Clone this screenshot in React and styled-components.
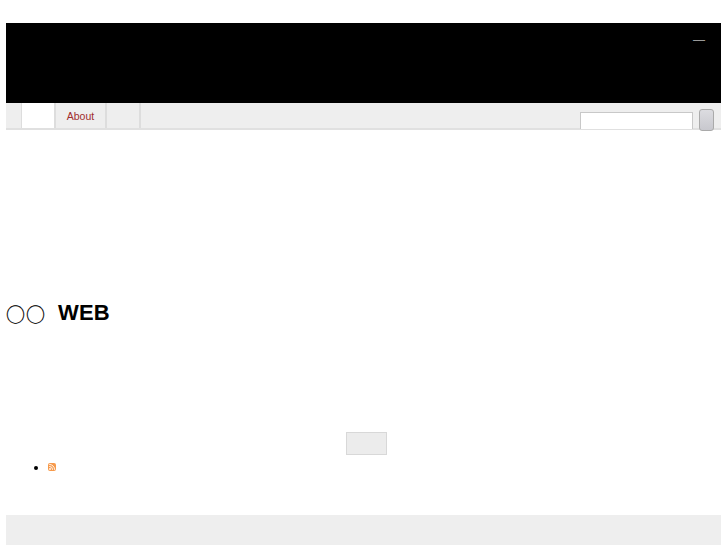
import styled, { createGlobalStyle } from "styled-components";

const GlobalStyle = createGlobalStyle`
  html, body {
    margin: 0;
    background: #fff;
  }
  body {
    font-family: "Liberation Sans", Arial, sans-serif;
  }
`;

const Page = styled.div`
  height: 545px;
  overflow: hidden;
  padding: 23px 6px 0;
  box-sizing: border-box;
  display: flex;
  flex-direction: column;
`;

const Header = styled.header`
  height: 80px;
  flex: none;
  background: #000;
  display: flex;
  justify-content: flex-end;
  padding: 10px 16px 0 0;
  box-sizing: border-box;
`;

const Dash = styled.span`
  font-size: 12px;
  line-height: 14px;
  color: #9a9a9a;
`;

const Nav = styled.nav`
  height: 27px;
  flex: none;
  box-sizing: border-box;
  background: #eee;
  border-bottom: 2px solid #e0e0e0;
  display: flex;
  justify-content: space-between;
  padding-left: 15px;
  padding-right: 7px;
`;

const Tabs = styled.ul`
  list-style: none;
  margin: 0;
  padding: 0;
  display: flex;
  border-left: 1px solid #ddd;
`;

const Tab = styled.li`
  width: ${(p) => p.$width}px;
  border-right: 2px solid #ddd;
  background: ${(p) => (p.$active ? "#fff" : "transparent")};
  color: #a02c2c;
  font-size: 10.5px;
  line-height: 26px;
  text-align: center;
`;

const Search = styled.form`
  display: flex;
  align-items: flex-end;
  gap: 6px;
  margin: 0;
`;

const SearchInput = styled.input`
  width: 113px;
  height: 17px;
  box-sizing: border-box;
  margin: 0 0 -1px;
  padding: 0;
  background: #fff;
  border: 1px solid #c8c8c8;
  border-bottom: 0;
`;

const SearchButton = styled.button`
  width: 15px;
  height: 22px;
  margin: 0 0 -3px;
  padding: 0;
  border: 1px solid #aaa;
  border-radius: 3px;
  background: linear-gradient(#dcdce0, #c8c8ce);
`;

const Main = styled.main`
  flex: 1;
  display: flex;
  flex-direction: column;
`;

const Title = styled.h1`
  margin: 169px 0 0;
  font-size: 22px;
  line-height: 28px;
  font-weight: 700;
  letter-spacing: 0.2px;
  color: #000;
  display: flex;
  align-items: center;
  gap: 12px;
`;

const Circles = styled.span`
  font-family: "Noto Sans CJK JP", sans-serif;
  font-weight: 400;
  font-size: 19px;
  line-height: 28px;
  letter-spacing: 1px;
  -webkit-text-stroke: 0.25px #000;
  position: relative;
  top: 1px;
`;

const More = styled.button`
  width: 41px;
  height: 23px;
  margin: 105px 0 0 340px;
  padding: 0;
  background: #ececec;
  border: 1px solid #d8d8d8;
`;

const Feed = styled.ul`
  margin: 5px 0 0;
  padding: 0 0 0 42px;
  font-size: 12px;
  line-height: 14px;
`;

const FeedItem = styled.li`
  height: 14px;
`;

const FeedIcon = styled.svg`
  display: block;
  padding-top: 3px;
  width: 8px;
  height: 8px;
`;

const Footer = styled.footer`
  height: 30px;
  flex: none;
  background: #eee;
`;

export default function App() {
  return (
    <>
      <GlobalStyle />
      <Page>
        <Header>
          <Dash>—</Dash>
        </Header>
        <Nav>
          <Tabs>
            <Tab $width={32} $active />
            <Tab $width={49}>About</Tab>
            <Tab $width={32} />
          </Tabs>
          <Search onSubmit={(e) => e.preventDefault()}>
            <SearchInput type="text" />
            <SearchButton type="submit" />
          </Search>
        </Nav>
        <Main>
          <Title>
            <Circles>○○</Circles>
            WEB
          </Title>
          <More type="button" />
          <Feed>
            <FeedItem>
              <FeedIcon viewBox="0 0 8 8">
                <rect width="8" height="8" rx="2" fill="#f79a4b" />
                <circle cx="2" cy="6" r="0.9" fill="#fff" />
                <path d="M1.2 3.4a3.4 3.4 0 0 1 3.4 3.4M1.2 1.4a5.4 5.4 0 0 1 5.4 5.4" fill="none" stroke="#fff" strokeWidth="0.9" />
              </FeedIcon>
            </FeedItem>
          </Feed>
        </Main>
        <Footer />
      </Page>
    </>
  );
}
